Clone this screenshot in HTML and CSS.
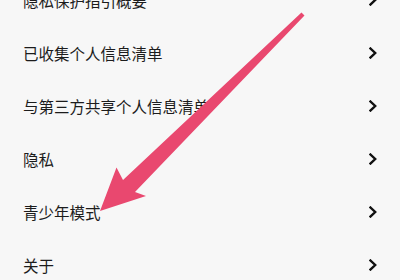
FILE: index.html
```html
<!DOCTYPE html>
<html lang="zh-CN">
<head>
<meta charset="utf-8">
<link rel="stylesheet" href="styles.css">
</head>
<body>
<div class="screen">
  <ul class="menu">
    <li class="item"><span class="label">隐私保护指引概要</span><svg class="chev" viewBox="0 0 8 12"><path d="M1.5 1.5 L6.2 6 L1.5 10.5"/></svg></li>
    <li class="item"><span class="label">已收集个人信息清单</span><svg class="chev" viewBox="0 0 8 12"><path d="M1.5 1.5 L6.2 6 L1.5 10.5"/></svg></li>
    <li class="item"><span class="label">与第三方共享个人信息清单</span><svg class="chev" viewBox="0 0 8 12"><path d="M1.5 1.5 L6.2 6 L1.5 10.5"/></svg></li>
    <li class="item"><span class="label">隐私</span><svg class="chev" viewBox="0 0 8 12"><path d="M1.5 1.5 L6.2 6 L1.5 10.5"/></svg></li>
    <li class="item"><span class="label">青少年模式</span><svg class="chev" viewBox="0 0 8 12"><path d="M1.5 1.5 L6.2 6 L1.5 10.5"/></svg></li>
    <li class="item"><span class="label">关于</span><svg class="chev" viewBox="0 0 8 12"><path d="M1.5 1.5 L6.2 6 L1.5 10.5"/></svg></li>
  </ul>
  <svg class="pointer" viewBox="0 0 400 280" width="400" height="280">
    <polygon points="301.5,12.5 123,180 116.5,167.5 100,211 146,196 135,192 304.5,15.5" fill="#e9486f"/>
  </svg>
</div>
</body>
</html>
```
FILE: styles.css
```css
html, body {
  margin: 0;
  padding: 0;
  background: #f7f7f7;
}
.screen {
  position: relative;
  width: 400px;
  height: 280px;
  overflow: hidden;
  background: #f7f7f7;
  font-family: "Noto Sans CJK SC", "Noto Sans", sans-serif;
}
.menu {
  list-style: none;
  margin: -27px 0 0 0;
  padding: 0;
}
.item {
  height: 53px;
  display: flex;
  align-items: center;
  justify-content: space-between;
  padding: 0 23px 0 23px;
}
.label {
  font-size: 15.5px;
  color: #1c1c1c;
  letter-spacing: 0;
}
.chev {
  width: 8px;
  height: 12px;
  fill: none;
  stroke: #111;
  stroke-width: 2.4;
  stroke-linecap: square;
  stroke-linejoin: miter;
}
.pointer {
  position: absolute;
  left: 0;
  top: 0;
  pointer-events: none;
}
```
